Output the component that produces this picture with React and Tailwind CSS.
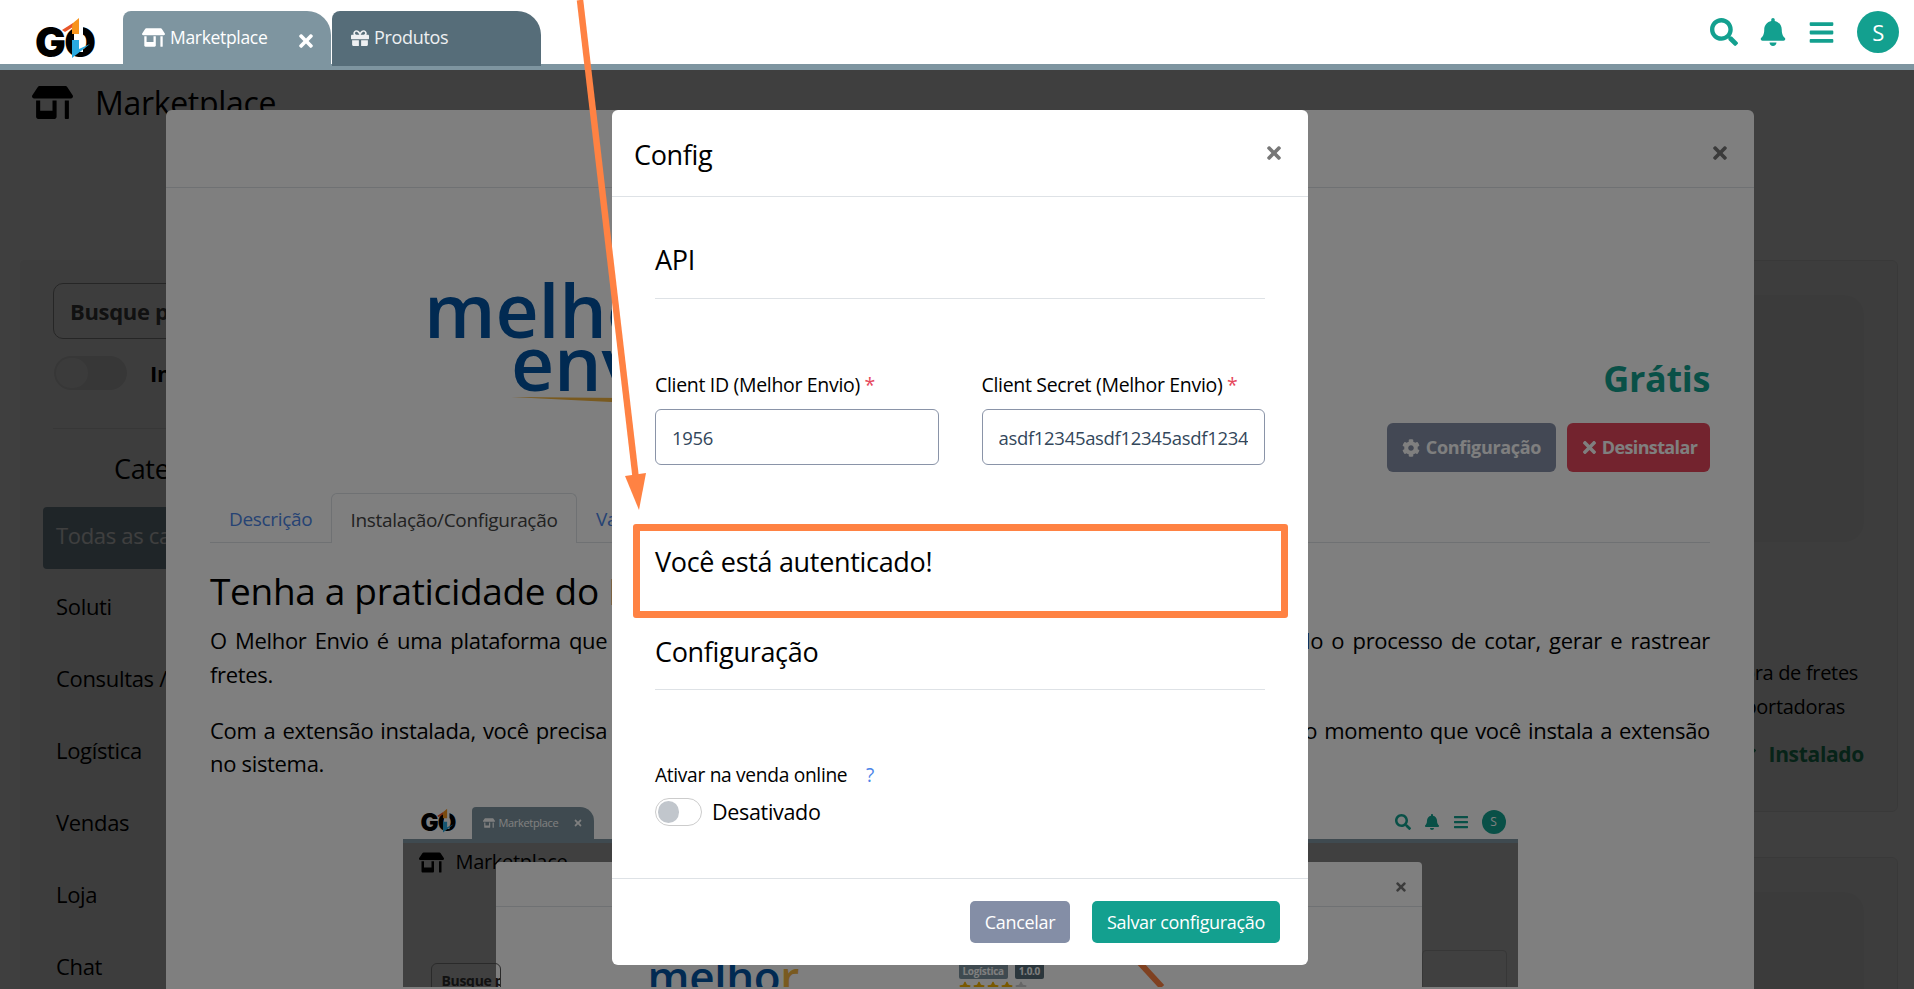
import React from "react";
import { FaStoreAlt, FaGift, FaSearch, FaBell, FaBars, FaCog, FaTimes, FaCheck, FaStar } from "react-icons/fa";

const sideItems = ["Soluti", "Consultas / Cadastros", "Logística", "Vendas", "Loja", "Chat"];

const Logo = ({ small }) => (
  <div className={`relative ${small ? "w-[38px] h-[24px]" : "w-[64px] h-[40px]"}`}>
    <span className={`absolute left-0 top-0 font-black text-black tracking-[-0.04em] font-['Inter',sans-serif] ${small ? "text-[24px] leading-[24px]" : "text-[41px] leading-[40px]"}`}>
      GO
    </span>
    <svg viewBox="0 0 64 40" className="absolute left-0 top-0 w-full h-full overflow-visible">
      <rect x="39" y="-2" width="9" height="32" fill="#fff" />
      <path d="M27 8 L38 1 L38 5 L30 10 Z" fill="#e8562a" />
      <path d="M38 1 L44 -4 L44 12 L37 12 L37 4 Z" fill="#f7941d" />
      <path d="M37 18 L44 18 L44 27 L55 22 L37 36 Z" fill="#29a9e0" />
    </svg>
  </div>
);

const MelhorLogo = () => (
  <div className="relative w-[280px] h-[130px] text-[#0255a5] font-['Open_Sans',sans-serif] font-semibold tracking-[-0.01em]">
    <div className="text-[75px] leading-[60px]">melhor</div>
    <div className="text-[75px] leading-[47px] pl-[87px]">envio</div>
    <svg viewBox="0 0 200 12" className="w-[200px] h-[10px] ml-[87px] mt-[11px]" preserveAspectRatio="none">
      <path d="M0 0 L200 2 L200 12 Z" fill="#f2b441" />
    </svg>
  </div>
);

const NestedScreenshot = () => (
  <div className="relative w-[1115px] h-[183px] mx-auto overflow-hidden">
    <div className="flex h-[35px] bg-white border-b-[4px] border-[#7e95a0] box-content">
      <div className="w-[69px] pl-[18px] pt-[7px]">
        <Logo small />
      </div>
      <div className="w-[122px] mt-[3px] bg-[#7e95a0] rounded-tr-[14px] rounded-tl-[4px] flex items-center px-[11px] gap-[4px] text-white text-[11px]">
        <FaStoreAlt className="text-[12px]" />
        <span>Marketplace</span>
        <FaTimes className="ml-auto text-[10px]" />
      </div>
      <div className="ml-auto flex items-center gap-[13px] pr-[12px] text-[#13a08f] text-[16px]">
        <FaSearch />
        <FaBell />
        <FaBars />
        <div className="w-[24px] h-[24px] rounded-full bg-[#13a08f] text-white text-[12px] flex items-center justify-center">S</div>
      </div>
    </div>
    <div className="bg-[#808080] h-[148px] pl-[16px] pt-[7px] flex items-start gap-[12px] text-[20px] leading-[24px] text-black">
      <FaStoreAlt className="text-[25px]" />
      <span>Marketplace</span>
    </div>
    {/* modal dentro do print */}
    <div className="absolute left-[93px] top-[58px] w-[926px] h-[125px] bg-white rounded-t-[4px]">
      <div className="h-[45px] border-b border-[#dee2e6] flex items-center justify-end pr-[14px] pt-[6px] text-[#777] text-[14px]">
        <FaTimes />
      </div>
      <div className="flex items-start pt-[52px] pl-[152px] h-[80px]">
        <div className="text-[#0255a5] font-semibold text-[44px] leading-[34px] font-['Open_Sans',sans-serif] w-[311px]">
          melho<span className="text-[#f2b441]">r</span>
        </div>
        <div className="pt-[4px]">
          <div className="flex gap-[7px]">
            <span className="bg-[#7e95a0] text-white text-[10px] font-bold rounded-[2px] px-[4px] h-[16px] leading-[16px]">Logística</span>
            <span className="bg-[#566d79] text-white text-[10px] font-bold rounded-[2px] px-[4px] h-[16px] leading-[16px]">1.0.0</span>
          </div>
          <div className="flex gap-[2px] mt-[2px] text-[#f5b301] text-[12px]">
            <FaStar /><FaStar /><FaStar /><FaStar /><FaStar className="text-[#ccc]" />
          </div>
        </div>
      </div>
      <svg className="absolute left-[640px] top-[100px] w-[30px] h-[25px]" viewBox="0 0 30 25">
        <path d="M3 0 L26 25" stroke="#ff8243" strokeWidth="6" />
      </svg>
    </div>
    <div className="absolute left-[1019px] top-[146px] w-[85px] h-[60px] border border-[#6e6e6e] rounded-[4px]" />
    <div className="absolute left-[28px] top-[159px] w-[70px] h-[40px] border border-[#555] rounded-[6px] text-[14px] font-bold text-[#222] px-[10px] py-[6px] overflow-hidden whitespace-nowrap">Busque p</div>
  </div>
);

export default function App() {
  return (
    <div className="relative w-full h-screen overflow-hidden bg-white text-black font-['Open_Sans',sans-serif] tracking-[-0.02em]">
      {/* Topo */}
      <header className="relative z-20 flex h-[70px] bg-white border-b-[6px] border-[#7e95a0]">
        <div className="w-[123px] pl-[35px] pt-[22px]">
          <Logo />
        </div>
        <div className="flex items-start pt-[11px] gap-[1px]">
          <div className="w-[208px] h-[53px] bg-[#7e95a0] rounded-tl-[8px] rounded-tr-[24px] flex items-center pl-[19px] pr-[15px] text-white text-[17.5px]">
            <FaStoreAlt className="text-[23px] mr-[5px]" />
            <span>Marketplace</span>
            <FaTimes className="ml-auto mt-[6px] text-[20px]" />
          </div>
          <div className="w-[209px] h-[55px] bg-[#566d79] rounded-tl-[8px] rounded-tr-[24px] flex items-center pl-[19px] text-white/90 text-[18px] pb-[2px]">
            <FaGift className="text-[18px] mr-[5px]" />
            <span>Produtos</span>
          </div>
        </div>
        <div className="ml-auto flex items-center gap-[21px] pr-[15px] text-[#13a08f]">
          <FaSearch className="text-[28px]" />
          <FaBell className="text-[28px]" />
          <FaBars className="text-[27px]" />
          <div className="w-[42px] h-[42px] ml-[1px] rounded-full bg-[#13a08f] text-white text-[22px] flex items-center justify-center">S</div>
        </div>
      </header>

      {/* Pagina por baixo dos modais */}
      <div className="px-[32px] pt-[15px] flex items-center gap-[22px] text-[32px] leading-[40px] h-[50px]">
        <FaStoreAlt className="text-[41px]" />
        <span>Marketplace</span>
      </div>
      <div className="flex pl-[20px] pr-[16px] pt-[140px] gap-[16px]">
        <aside className="w-[340px] h-[760px] bg-[#f7f7f7] rounded-t-[4px] pt-[23px] px-[23px]">
          <div className="ml-[10px] h-[56px] border border-[#999] rounded-[10px] flex items-center px-[16px] text-[22px] font-bold text-[#444]">
            Busque por nome
          </div>
          <div className="ml-[11px] mt-[17px] flex items-center gap-[23px]">
            <div className="w-[73px] h-[34px] rounded-full bg-[#ddd] p-[2px]">
              <div className="w-[32px] h-[30px] rounded-full bg-[#eee]" />
            </div>
            <span className="text-[22px] font-bold">Instalados</span>
          </div>
          <div className="ml-[10px] mt-[38px] border-t border-[#ddd]" />
          <div className="pl-[71px] mt-[22px] text-[27px] leading-[36px]">Categorias</div>
          <div className="mt-[20px] h-[62px] bg-[#7e95a0] rounded-[4px] flex items-center pb-[6px] px-[13px] text-[22px] text-white">Todas as categorias</div>
          <div className="flex flex-col">
            {sideItems.map((item) => (
              <div key={item} className="h-[72px] pt-[19px] px-[13px] text-[22px] leading-[36px] whitespace-nowrap">
                {item}
              </div>
            ))}
          </div>
        </aside>
        <div className="ml-auto w-[500px] flex flex-col gap-[45px]">
          <div className="h-[552px] bg-[#f7f7f7] border border-[#e6e6e6] rounded-[6px] pt-[34px] pr-[33px]">
            <div className="h-[247px] ml-[30px] bg-[#eee] rounded-[20px]" />
            <div className="mt-[114px] text-right text-[20px] leading-[34px]">
              <div className="pr-[6px]">Integração com calculadora de fretes</div>
              <div className="pr-[19px]">e as principais transportadoras</div>
            </div>
            <div className="mt-[15px] flex justify-end items-center gap-[13px] text-[#1c8f63] font-bold text-[21px] leading-[30px]">
              <FaCheck className="text-[14px]" />
              <span>Instalado</span>
            </div>
          </div>
          <div className="h-[200px] bg-[#f7f7f7] border border-[#e6e6e6] rounded-[6px] pt-[34px] pr-[33px]">
            <div className="h-[150px] ml-[30px] bg-[#eee] rounded-[20px]" />
          </div>
        </div>
      </div>

      {/* Primeiro fundo escuro */}
      <div className="absolute inset-x-0 top-[70px] bottom-0 bg-black/50" />

      {/* Modal da extensao */}
      <div className="absolute left-[166px] top-[110px] w-[1588px] h-[879px] bg-white rounded-t-[6px] overflow-hidden">
        <div className="h-[78px] border-b border-[#dee2e6] flex items-center justify-end pr-[24px] pt-[8px] text-[#777] text-[20px]">
          <FaTimes />
        </div>
        <div className="px-[44px]">
          <div className="flex justify-between h-[304px]">
            <div className="ml-[214px] pt-[91px]">
              <MelhorLogo />
            </div>
            <div className="flex flex-col items-end pt-[165px]">
              <div className="text-[36px] leading-[52px] font-bold text-[#13a08f]">Grátis</div>
              <div className="mt-[18px] flex gap-[11px] text-white font-bold text-[18px]">
                <div className="w-[169px] h-[49px] rounded-[6px] bg-[#8690a8] flex items-center justify-center gap-[6px]">
                  <FaCog className="text-[18px]" />
                  Configuração
                </div>
                <div className="w-[143px] h-[49px] rounded-[6px] bg-[#e6475c] flex items-center justify-center gap-[3px] tracking-[-0.035em]">
                  <FaTimes className="text-[19px]" />
                  Desinstalar
                </div>
              </div>
            </div>
          </div>
          <div className="flex items-end h-[51px] border-b border-[#dee2e6] text-[19px]">
            <div className="w-[121px] h-[49px] flex items-center pl-[19px] pt-[3px] text-[#4d86e8]">Descrição</div>
            <div className="w-[246px] -mb-[1px] h-[50px] bg-white border border-b-0 border-[#dee2e6] rounded-t-[6px] flex items-center justify-center pt-[3px] text-[#444]">Instalação/Configuração</div>
            <div className="h-[49px] flex items-center pl-[19px] pt-[3px] text-[#4d86e8]">Valores</div>
          </div>
          <h1 className="mt-[24px] text-[37px] leading-[48px] font-normal">Tenha a praticidade do Melhor Envio no seu sistema</h1>
          <div className="mt-[8px] text-[22px] leading-[34px]">
            <p className="text-justify [text-align-last:justify]">
              O Melhor Envio é uma plataforma que integra as principais transportadoras do mercado, simplificando todo o processo de cotar, gerar e rastrear
            </p>
            <p>fretes.</p>
          </div>
          <div className="mt-[23px] text-[22px] leading-[33px]">
            <p className="text-justify [text-align-last:justify]">
              Com a extensão instalada, você precisa conectar a sua conta e o sistema já começa a cotar fretes, a partir do momento que você instala a extensão
            </p>
            <p>no sistema.</p>
          </div>
        </div>
        <div className="mt-[24px]">
          <NestedScreenshot />
        </div>
      </div>

      {/* Segundo fundo escuro */}
      <div className="absolute inset-x-0 top-[70px] bottom-0 bg-black/50" />

      {/* Modal Config */}
      <div className="absolute left-[612px] top-[110px] w-[696px] h-[855px] bg-white rounded-[6px] flex flex-col">
        <div className="h-[87px] border-b border-[#dee2e6] flex items-center justify-between pl-[22px] pr-[24px]">
          <span className="text-[27px] leading-[36px] pt-[4px]">Config</span>
          <FaTimes className="text-[20px] text-[#777] mb-[1px]" />
        </div>
        <div className="flex-1 px-[43px]">
          <div className="pt-[41px] text-[27px] leading-[44px] border-b border-[#dee2e6] h-[102px] box-border">
            API
          </div>
          <div className="mt-[72px] grid grid-cols-2 gap-[43px]">
            <label className="block">
              <span className="block text-[19.5px] leading-[28px] mb-[10px]">
                Client ID (Melhor Envio) <span className="text-[#e6475c]">*</span>
              </span>
              <input readOnly value="1956" className="w-full h-[56px] border border-[#8a94a8] rounded-[6px] px-[16px] text-[18.5px] text-[#33475b] outline-none" />
            </label>
            <label className="block">
              <span className="block text-[19.5px] leading-[28px] mb-[10px]">
                Client Secret (Melhor Envio) <span className="text-[#e6475c]">*</span>
              </span>
              <input readOnly value="asdf12345asdf12345asdf12345asdf12345" className="w-full h-[56px] border border-[#8a94a8] rounded-[6px] px-[16px] text-[18.5px] text-[#33475b] outline-none" />
            </label>
          </div>
          <div className="mt-[77px] text-[27px] leading-[40px]">Você está autenticado!</div>
          <div className="mt-[50px] text-[27px] leading-[40px]">Configuração</div>
          <div className="mt-[17px] border-b border-[#dee2e6]" />
          <div className="mt-[72px] text-[19.2px] leading-[26px]">
            Ativar na venda online <span className="ml-[14px] text-[#4d86e8]">?</span>
          </div>
          <div className="mt-[10px] flex items-center gap-[10px]">
            <div className="w-[47px] h-[28px] rounded-full border border-[#ccc] p-[2px]">
              <div className="w-[21px] h-[22px] rounded-full bg-[#c1c6cc]" />
            </div>
            <span className="text-[21.5px] leading-[28px]">Desativado</span>
          </div>
        </div>
        <div className="h-[87px] border-t border-[#dee2e6] flex items-center justify-end gap-[22px] pr-[28px] text-white text-[18px]">
          <div className="w-[100px] h-[42px] rounded-[5px] bg-[#848ea6] flex items-center justify-center">Cancelar</div>
          <div className="w-[188px] h-[42px] rounded-[5px] bg-[#13a08f] flex items-center justify-center">Salvar configuração</div>
        </div>
      </div>

      {/* Anotacao laranja por cima do print */}
      <div className="absolute z-30 left-[633px] top-[524px] w-[655px] h-[94px] border-[7px] border-[#ff8243] rounded-[3px]" />
      <svg className="absolute z-30 left-0 top-0 w-[1914px] h-[989px] pointer-events-none" viewBox="0 0 1914 989">
        <path d="M580 0 L636 480" stroke="#ff8243" strokeWidth="6.5" fill="none" />
        <path d="M625 476 L646 473 L639 510 Z" fill="#ff8243" />
      </svg>
    </div>
  );
}
